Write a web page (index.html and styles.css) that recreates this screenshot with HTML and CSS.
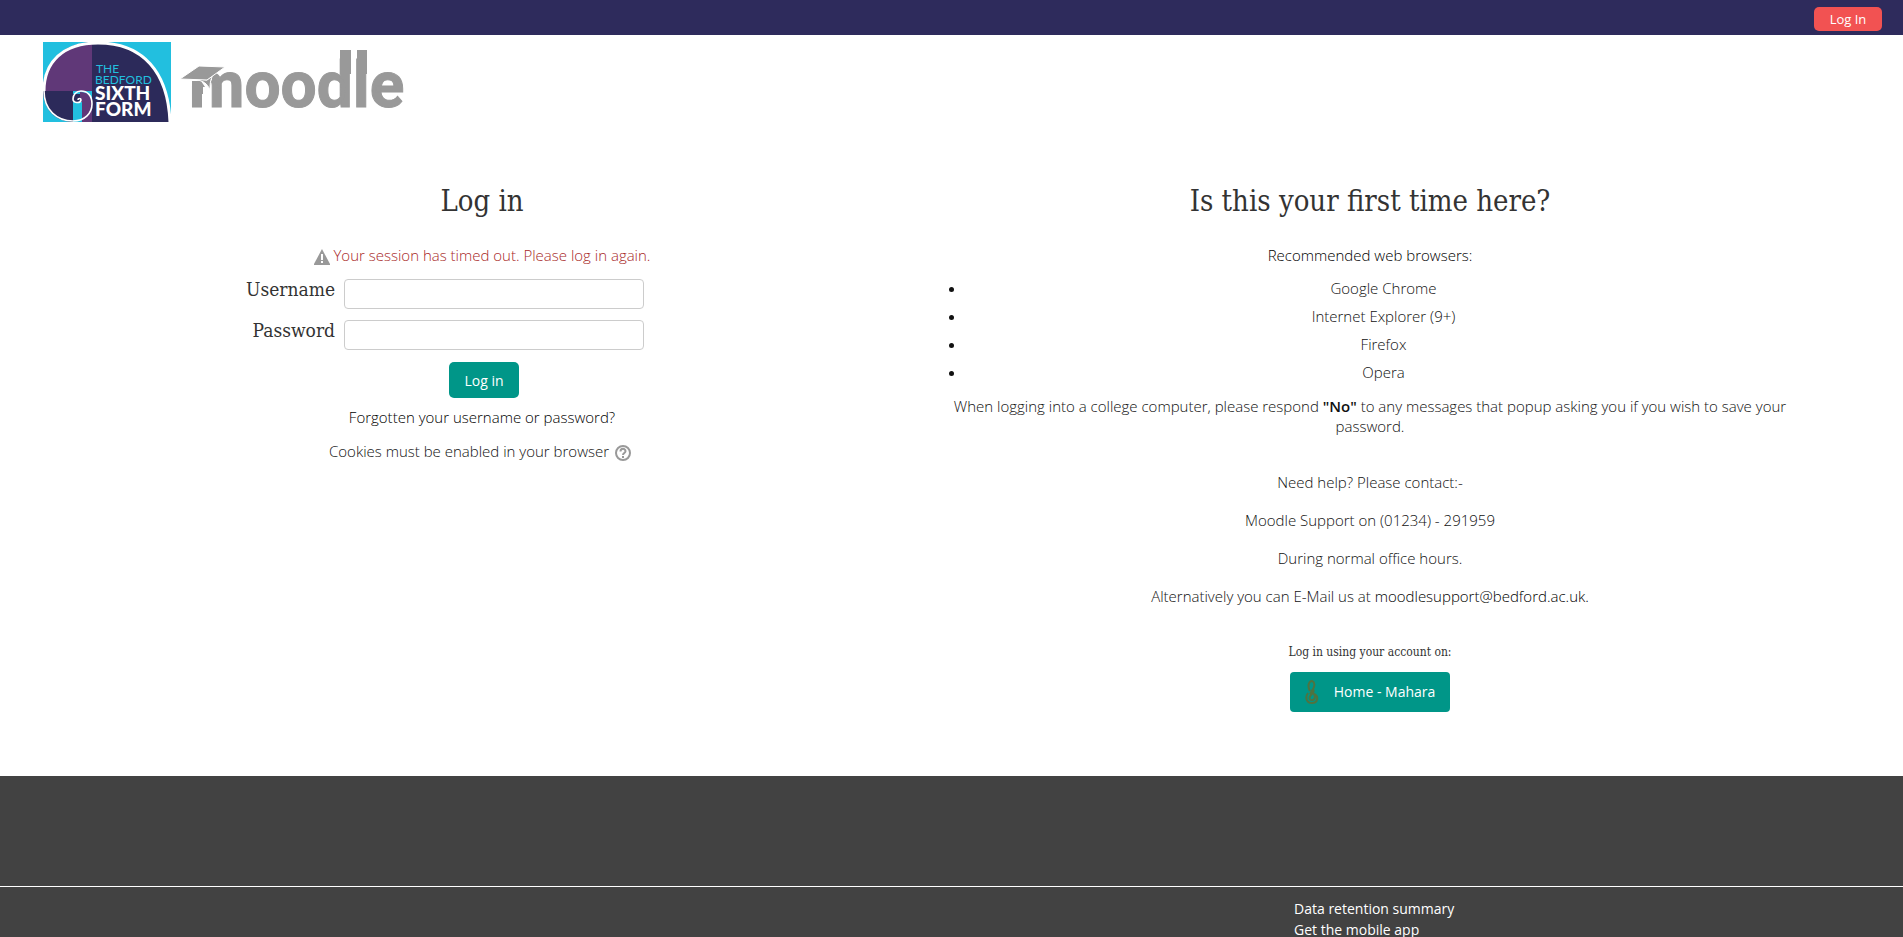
FILE: index.html
```html
<!DOCTYPE html>
<html lang="en">
<head>
<meta charset="utf-8">
<title>Log in to the site</title>
<link rel="stylesheet" href="styles.css">
</head>
<body>
<nav class="topbar"><button type="button" class="topbar-login">Log In</button></nav>
<header class="brand">
  <svg class="crest" viewBox="0 0 128 80" role="img" aria-label="The Bedford Sixth Form">
    <rect width="128" height="80" fill="#22bfdf"/>
    <path d="M0 49C0 20 20 0 55 0C100 0 125 32 128 80H30C12 80 0 66 0 49Z" fill="#2c2a5a"/>
    <path d="M0 49C0 20 20 1 49 0V49Z" fill="#603878"/>
    <rect x="30" y="49" width="19" height="31" fill="#22bfdf"/>
    <path d="M39 60H49V80H39Z" fill="#603878"/>
    <path d="M37 50C45 50 48 54 49 60H37Z" fill="#603878"/>
    <rect x="30" y="52" width="7" height="8" fill="#2c2a5a"/>
    <path d="M127 80C125 30 100 1 55 1C20 1 1 20 1 49" fill="none" stroke="#fff" stroke-width="3"/>
    <path d="M1 49C1 68 14 79 30 79C42 79 49 71 49 62C49 53 44 49 38 49C33 49 30 53 30 57C30 61 37 62 38 58C38 56 35 56 35 58" fill="none" stroke="#fff" stroke-width="1.6"/>
    <g font-family="Lato, sans-serif" fill="#22bfdf">
      <text x="53" y="31" font-size="12">THE</text>
      <text x="52" y="42" font-size="12">BEDFORD</text>
      <text x="52" y="58" font-size="19" font-weight="900" fill="#fff">SIXTH</text>
      <text x="52" y="74" font-size="19" font-weight="900" fill="#fff">FORM</text>
    </g>
  </svg>
  <svg class="wordmark" viewBox="0 0 224 80" role="img" aria-label="moodle">
    <text x="9" y="65" font-family="Roboto, sans-serif" font-weight="700" font-size="64" fill="#999" stroke="#999">moodle</text>
    <path d="M160 8H171V32H160ZM177 8H187V32H177Z" fill="#999"/>
    <path d="M8 30H32V38L24 44H8Z" fill="#fff"/>
    <path d="M12 39H21L25 45H23V52H12Z" fill="#999"/>
    <path d="M17 37L27 38L33 33C30 38 30 43 30 48C27 41 23 39 17 38Z" fill="#999" stroke="#fff"/>
    <path d="M0 37L19 24L45 25L27 38Z" fill="#999" stroke="#fff"/>
  </svg>
</header>
<main class="panels">
  <section class="panel">
    <h2>Log in</h2>
    <p class="error" role="alert"><svg class="icon" viewBox="0 0 16 16" aria-hidden="true"><path d="M8 0L16 15V16H0V15Z" fill="#999"/><path d="M7 5H9V11H7ZM7 12H9V14H7Z" fill="#fff"/></svg> Your session has timed out. Please log in again.</p>
    <form class="login-form">
      <div class="field"><label for="username">Username</label><input id="username" type="text"></div>
      <div class="field"><label for="password">Password</label><input id="password" type="password"></div>
      <button type="button" class="submit">Log in</button>
    </form>
    <p class="forgot"><a href="#">Forgotten your username or password?</a></p>
    <p class="cookies">Cookies must be enabled in your browser <a class="help" href="#" aria-label="Help with cookies"><svg class="icon" viewBox="0 0 16 16" aria-hidden="true"><circle cx="8" cy="8" r="7" fill="none" stroke="#999" stroke-width="2"/><path d="M5.5 6.5C5.5 3 10.500 3 10.500 6.200C10.500 8 8 8 8 10" fill="none" stroke="#999" stroke-width="2"/><path d="M7 11H9V13H7Z" fill="#999"/></svg></a></p>
  </section>
  <section class="panel signup">
    <h2>Is this your first time here?</h2>
    <p class="lead">Recommended web browsers:</p>
    <ul><li>Google Chrome</li><li>Internet Explorer (9+)</li><li>Firefox</li><li>Opera</li></ul>
    <p class="notice">When logging into a college computer, please respond <strong>"No"</strong> to any messages that popup asking you if you wish to save your password.</p>
    <div class="contact">
      <p>Need help? Please contact:-</p>
      <p>Moodle Support on (01234) - 291959</p>
      <p>During normal office hours.</p>
      <p>Alternatively you can E-Mail us at <a href="#">moodlesupport@bedford.ac.uk.</a></p>
    </div>
    <h6>Log in using your account on:</h6>
    <a class="provider" href="#"><svg class="koru" viewBox="0 0 14 24" aria-hidden="true"><path d="M5 11C2 6 4 1 7 1C10 2 10 6 8 9L5 14M8 9C10 12 7 14 6 15M3 13C0 17 1 23 7 23C13 23 14 16 9 14C11 18 9 20 7 20C4 20 4 17 6 15" fill="none" stroke="#4f7340" stroke-width="2"/></svg>Home - Mahara</a>
  </section>
</main>
<footer class="footer"><div class="footer-links"><a href="#">Data retention summary</a><a href="#">Get the mobile app</a></div></footer>
</body>
</html>
```
FILE: styles.css
```css
* { box-sizing: border-box; }
body { margin: 0; font: 14px/20px "Open Sans", sans-serif; color: #333; background: #fff; }
h2, h6, p, ul { margin: 0; }
a { color: #000; text-decoration: none; }
button { border: 0; font-family: inherit; color: #fff; cursor: pointer; }
p, li { font-size: 15px; font-weight: 300; color: #111; }
.topbar { display: flex; justify-content: flex-end; align-items: center; height: 35px; padding: 3px 21px 0 0; background: #2e2b5c; }
.topbar-login { width: 68px; height: 24px; padding: 0; border-radius: 5px; background: #f25252; font-size: 13px; }
.brand { display: flex; gap: 9px; padding: 7px 43px 0; }
.crest { width: 128px; height: 80px; }
.wordmark { width: 224px; height: 80px; }
.panels { display: grid; grid-template-columns: 880fr 862fr; gap: 17px; padding: 59px 102px 64px 42px; text-align: center; }
h2, h6, label { font-family: "DejaVu Serif Condensed", "DejaVu Serif", serif; font-weight: 400; }
h2 { font-size: 29px; line-height: 40px; margin-bottom: 24px; }
.icon { width: 16px; height: 16px; vertical-align: -4px; }
.error { color: #a8281f; margin-bottom: 14px; }
.login-form { display: grid; gap: 11px; padding-left: 4px; }
.field { display: grid; grid-template-columns: 1fr 2fr; gap: 9px; }
.field label { font-size: 19px; line-height: 20px; text-align: right; }
.field input { width: 300px; height: 30px; padding: 4px 6px; border: 1px solid #ccc; border-radius: 4px; font: inherit; }
.submit { justify-self: center; height: 36px; margin-top: 1px; padding: 0 15px; border-radius: 5px; background: #009688; font-size: 14px; }
.forgot { margin: 9px 0 14px; }
.cookies { padding-right: 4px; }
.help { margin-left: 2px; }
.lead { color: #000; }
.signup ul { margin: 9px 0 10px 27px; padding: 0; }
.signup li { line-height: 20px; padding: 4px 0; }
.notice strong { font-weight: 600; }
.contact { display: grid; gap: 18px; margin: 36px 0; }
h6 { font-size: 12px; line-height: 20px; margin-bottom: 10px; }
.provider { display: inline-flex; align-items: center; gap: 15px; height: 40px; padding: 0 15px; border-radius: 4px; background: #009688; color: #fff; }
.koru { width: 14px; height: 24px; }
.footer { background: #424242; padding-top: 110px; }
.footer-links { display: grid; justify-items: start; border-top: 1px solid #fff; padding: 11px 0 8px 68%; }
.footer a { color: #fff; line-height: 21px; }
```
